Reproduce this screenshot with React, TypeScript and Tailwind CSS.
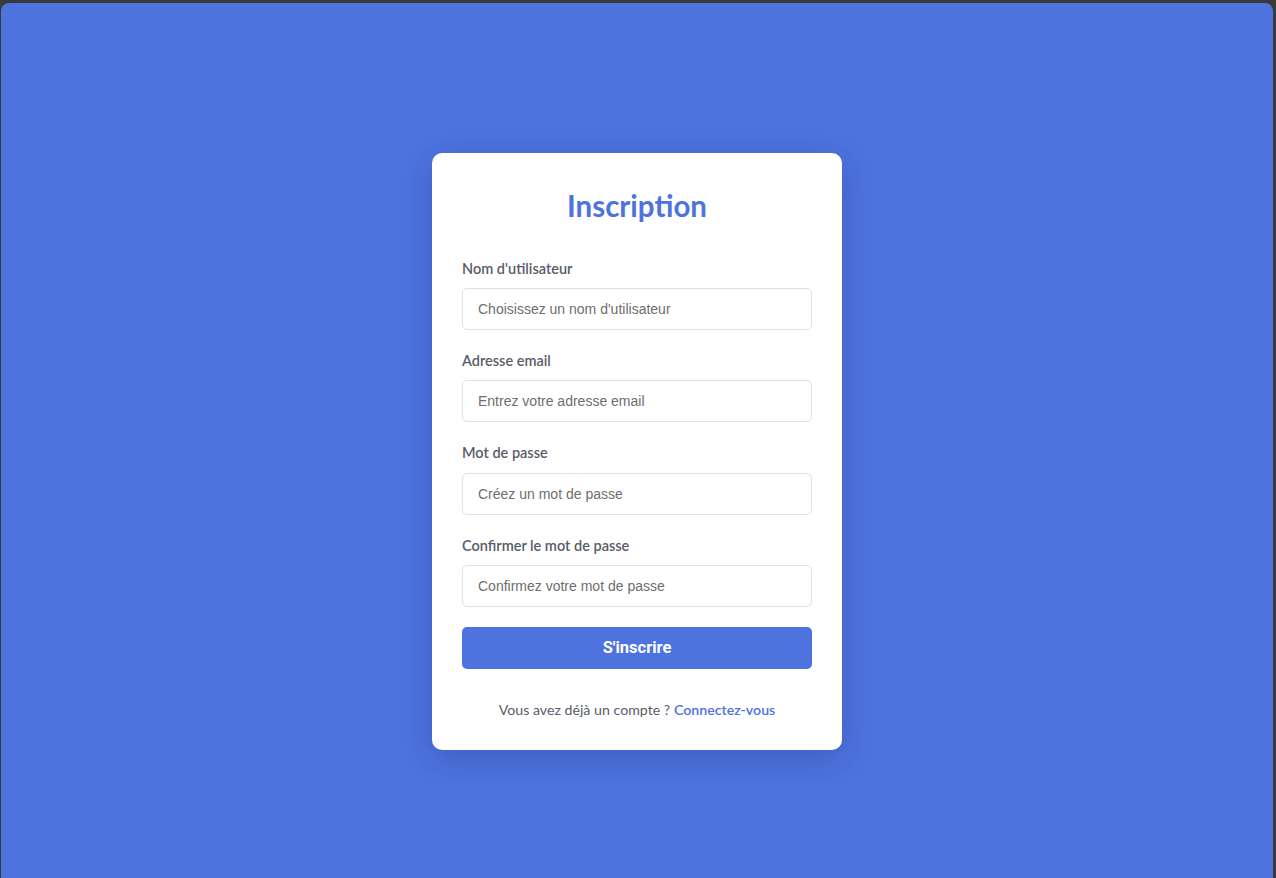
import React from "react";

const fields = [
  { label: "Nom d'utilisateur", placeholder: "Choisissez un nom d'utilisateur", type: "text" },
  { label: "Adresse email", placeholder: "Entrez votre adresse email", type: "email" },
  { label: "Mot de passe", placeholder: "Créez un mot de passe", type: "password" },
  { label: "Confirmer le mot de passe", placeholder: "Confirmez votre mot de passe", type: "password" },
];

export default function App() {
  return (
    <div className="w-full h-[878px] bg-[#3a3a3a] pt-[3px] pl-[1px] pr-[3px]">
      <div className="h-full bg-[#4e73df] rounded-t-[8px] flex justify-center pt-[150px] font-['Lato','Segoe_UI',sans-serif]">
        <div className="w-[410px] h-[597px] bg-white rounded-[10px] shadow-[0_8px_30px_rgba(20,30,90,0.25)] px-[30px] pt-[35.6px]">
          <h2 className="text-[29.5px] leading-[34px] font-bold text-[#4e73df] text-center mb-[35px]">Inscription</h2>
          {fields.map((f) => (
            <div key={f.label} className="mb-[20px]">
              <label className="block text-[14.5px] leading-[22.33px] font-semibold text-[#5a5c69] mb-[8px]">{f.label}</label>
              <input
                type={f.type}
                placeholder={f.placeholder}
                className="block w-full h-[42px] border border-[#dfe1ea] rounded-[5px] px-[15px] text-[14px] font-['Liberation_Sans',Arial,sans-serif] text-[#333] placeholder:text-[#6e6e6e] outline-none"
              />
            </div>
          ))}
          <button className="w-full h-[42px] rounded-[5px] bg-[#4e73df] text-white text-[16.5px] font-bold font-['Roboto',Arial,sans-serif]">
            S'inscrire
          </button>
          <p className="mt-[30px] text-center text-[14.2px] leading-[22.4px] text-[#5a5c69]">
            Vous avez déjà un compte ?{" "}
            <a href="#" className="text-[#4e73df] font-semibold">Connectez-vous</a>
          </p>
        </div>
      </div>
    </div>
  );
}
